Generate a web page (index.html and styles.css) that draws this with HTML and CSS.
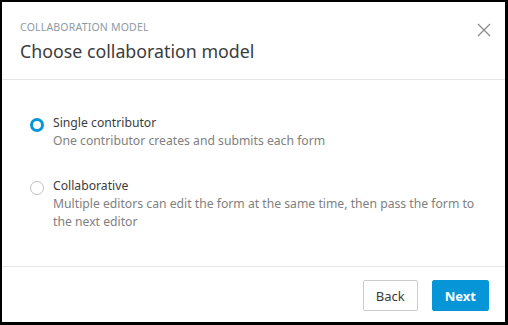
FILE: index.html
```html
<!DOCTYPE html>
<html lang="en">
<head>
  <meta charset="UTF-8" />
  <title>Choose collaboration model</title>
  <link rel="stylesheet" href="styles.css">
</head>
<body>
  <div class="dialog">
    <div class="dialog-header">
      <div>
        <div class="eyebrow">COLLABORATION MODEL</div>
        <h1 class="title">Choose collaboration model</h1>
      </div>
      <button class="close" aria-label="Close">
        <svg width="14" height="14" viewBox="0 0 14 14"><path d="M1 1 L13 13 M13 1 L1 13" stroke="#8c8c8c" stroke-width="1.3" fill="none"/></svg>
      </button>
    </div>

    <div class="dialog-body">
      <label class="option">
        <input type="radio" name="model" checked>
        <span class="radio"></span>
        <span class="option-text">
          <span class="option-title">Single contributor</span>
          <span class="option-desc">One contributor creates and submits each form</span>
        </span>
      </label>
      <label class="option">
        <input type="radio" name="model">
        <span class="radio"></span>
        <span class="option-text">
          <span class="option-title">Collaborative</span>
          <span class="option-desc">Multiple editors can edit the form at the same time, then pass the form to the next editor</span>
        </span>
      </label>
    </div>

    <div class="dialog-footer">
      <button class="btn btn-secondary">Back</button>
      <button class="btn btn-primary">Next</button>
    </div>
  </div>
</body>
</html>
```

FILE: styles.css
```css
html, body { margin: 0; height: 100%; background: #000; }
body { padding: 2px 3px 3px 2px; box-sizing: border-box; font-family: "Noto Sans", "Open Sans", sans-serif; }

.dialog { background: #fff; height: 100%; display: flex; flex-direction: column; }

.dialog-header { display: flex; justify-content: space-between; align-items: flex-start; padding: 18px 14px 0 18px; height: 59px; border-bottom: 1px solid #e6e6e6; }
.eyebrow { font-size: 10.5px; letter-spacing: 0.2px; color: #8d9aa6; line-height: 14px; }
.title { margin: 6px 0 0; font-size: 17.8px; font-weight: 400; color: #3c3c3c; line-height: 23px; }
.close { background: none; border: 0; padding: 0; margin-top: 3px; cursor: pointer; }

.dialog-body { flex: 1; padding: 34px 20px 0 27px; display: flex; flex-direction: column; gap: 27px; }
.option { display: flex; align-items: flex-start; cursor: pointer; }
.option input { display: none; }
.radio { width: 14px; height: 14px; border-radius: 50%; border: 1px solid #bfbfbf; box-sizing: border-box; margin: 4px 9px 0 1px; flex: none; }
.option input:checked + .radio { border: 3.5px solid #0696d7; }
.option-text { display: flex; flex-direction: column; font-size: 12.2px; line-height: 18px; }
.option-title { color: #3c3c3c; }
.option-desc { color: #808080; }

.dialog-footer { display: flex; justify-content: flex-end; gap: 14px; padding: 13px 16px 0; height: 56px; border-top: 1px solid #e6e6e6; box-sizing: border-box; }
.btn { height: 31px; min-width: 55px; padding: 0 12px; font-family: inherit; font-size: 13px; border-radius: 2px; cursor: pointer; }
.btn-secondary { background: #fff; border: 1px solid #cccccc; color: #3c3c3c; }
.btn-primary { background: #0696d7; border: 1px solid #0696d7; color: #fff; font-weight: 700; }
```
